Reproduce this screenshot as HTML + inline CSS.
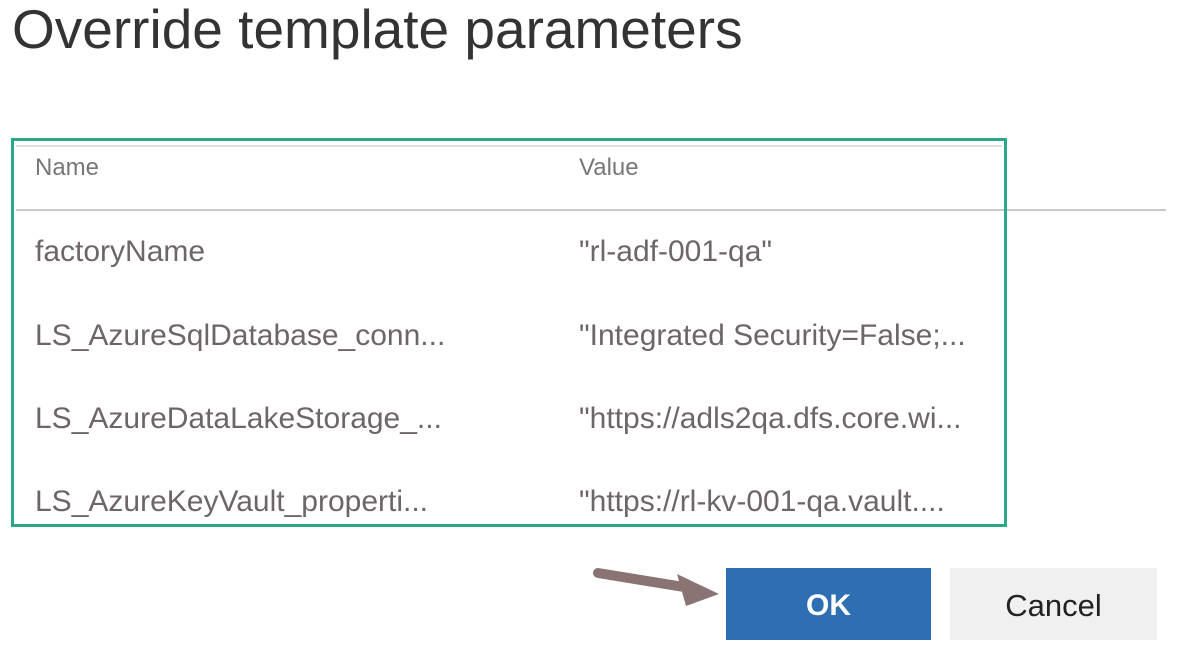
<!DOCTYPE html>
<html><head><style>
body{margin:0;width:1181px;height:666px;background:#fff;font-family:"Liberation Sans",sans-serif;position:relative;overflow:hidden}
.t{position:absolute;white-space:nowrap}
.title{left:12px;top:-3px;font-size:55px;color:#333}
.box{position:absolute;left:11px;top:138px;width:990px;height:383px;border:3px solid #2aa88a}
.h{font-size:24px;color:#777}
.r{font-size:30px;color:#6e6666}
</style></head><body>
<div class="t title">Override template parameters</div>
<div style="position:absolute;left:16px;top:145px;width:986px;height:2px;background:#e0e0e0"></div>
<div style="position:absolute;left:16px;top:209px;width:1150px;height:2px;background:#c8c8c8"></div>
<div class="box"></div>
<div class="t h" style="left:35px;top:154px">Name</div>
<div class="t h" style="left:579px;top:154px">Value</div>
<div class="t r" style="left:35px;top:235px">factoryName</div>
<div class="t r" style="left:579px;top:235px">"rl-adf-001-qa"</div>
<div class="t r" style="left:35px;top:319px">LS_AzureSqlDatabase_conn...</div>
<div class="t r" style="left:579px;top:319px">"Integrated Security=False;...</div>
<div class="t r" style="left:35px;top:402px">LS_AzureDataLakeStorage_...</div>
<div class="t r" style="left:579px;top:402px">"https://adls2qa.dfs.core.wi...</div>
<div class="t r" style="left:35px;top:485px">LS_AzureKeyVault_properti...</div>
<div class="t r" style="left:579px;top:485px">"https://rl-kv-001-qa.vault....</div>
<div style="position:absolute;left:726px;top:568px;width:205px;height:72px;background:#2e6fb4;color:#fff;font-size:30px;font-weight:bold;text-align:center;line-height:76px">OK</div>
<div style="position:absolute;left:950px;top:568px;width:207px;height:72px;background:#f0f0f0;color:#222;font-size:31px;text-align:center;line-height:76px">Cancel</div>
<svg style="position:absolute;left:0;top:0" width="1181" height="666">
<path d="M598 573 L690 588" stroke="#8a7373" stroke-width="10" stroke-linecap="round"/>
<path d="M677 574 L719 594 L686 606 Z" fill="#8a7373"/>
</svg>
</body></html>
